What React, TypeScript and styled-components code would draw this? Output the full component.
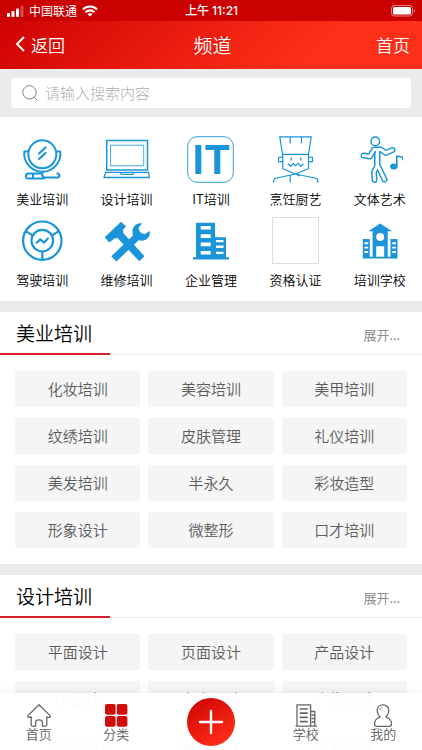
import React from "react";
import styled, { createGlobalStyle } from "styled-components";

const BLUE = "#1b95d9";

const GlobalStyle = createGlobalStyle`
  * { box-sizing: border-box; }
  body {
    margin: 0;
    background: #fff;
    font-family: "Noto Sans CJK SC", "Noto Sans", sans-serif;
    font-weight: 350;
    color: #000;
  }
  button, input { font: inherit; color: inherit; }
  button { border: 0; padding: 0; background: none; cursor: pointer; }
  a { color: inherit; text-decoration: none; }
  h1, h2 { margin: 0; font-weight: inherit; }
`;

const Screen = styled.div`
  position: relative;
  height: 100vh;
  display: flex;
  flex-direction: column;
  overflow: hidden;
`;

const StatusBar = styled.div`
  flex: none;
  height: 21px;
  padding: 0 6px 0 7px;
  display: grid;
  grid-template-columns: 1fr auto 1fr;
  align-items: center;
  background: #cb0000;
  color: #fff;
  font-size: 12px;
  line-height: 20px;
  font-weight: 400;
`;

const Carrier = styled.div`
  display: flex;
  align-items: center;
  gap: 5px;
`;

const Clock = styled.time`
  font-family: Inter, "Noto Sans CJK SC", sans-serif;
  font-weight: 500;
`;

const Battery = styled.div`
  display: flex;
  justify-content: flex-end;
`;

const Header = styled.header`
  flex: none;
  height: 48px;
  padding: 0 12px 2px 15px;
  display: grid;
  grid-template-columns: 1fr auto 1fr;
  align-items: center;
  background: linear-gradient(135deg, #ce0403 0%, #ff3019 75%);
  color: #fff;
  font-size: 17px;
`;

const BackLink = styled.a`
  display: flex;
  align-items: center;
  gap: 5px;
`;

const HomeLink = styled.a`
  justify-self: end;
`;

const Title = styled.h1`
  font-size: 19px;
`;

const SearchBar = styled.form`
  flex: none;
  height: 48px;
  padding: 9px 11px;
  background: #e9ebed;
`;

const SearchField = styled.label`
  height: 30px;
  padding: 0 11px;
  display: flex;
  align-items: center;
  gap: 7px;
  border-radius: 4px;
  background: #fff;
`;

const SearchInput = styled.input`
  flex: 1;
  min-width: 0;
  height: 30px;
  padding: 0 0 2px;
  border: 0;
  outline: 0;
  background: none;
  font-size: 15px;
  font-weight: 300;
  &::placeholder { color: #b0b0b0; opacity: 1; }
`;

const Content = styled.main`
  flex: 1;
  min-height: 0;
  overflow-y: auto;
  scrollbar-width: none;
  padding-bottom: 58px;
`;

const Channels = styled.nav`
  padding: 19px 0 5px;
  display: grid;
  grid-template-columns: repeat(5, 1fr);
  row-gap: 2px;
`;

const Channel = styled.a`
  display: flex;
  flex-direction: column;
  align-items: center;
  font-size: 13px;
  line-height: 32px;
`;

const ChannelIcon = styled.svg`
  display: block;
  width: 47px;
  height: 47px;
`;

const EmptyPicture = styled.span`
  width: 47px;
  height: 47px;
  border: 1px solid #dedede;
`;

const Section = styled.section`
  border-top: 11px solid #ebebeb;
`;

const SectionHead = styled.div`
  height: 43px;
  padding-right: 22px;
  display: flex;
  justify-content: space-between;
  border-bottom: 1px solid #ececec;
`;

const SectionTitle = styled.h2`
  width: 110px;
  height: 43px;
  padding-left: 16px;
  border-bottom: 2px solid #d71f2b;
  font-size: 19px;
  line-height: 42px;
  white-space: nowrap;
`;

const Expand = styled.button`
  color: #808080;
  font-size: 13px;
  line-height: 46px;
`;

const Tiles = styled.div`
  padding: 16px 15px;
  display: grid;
  grid-template-columns: repeat(3, 1fr);
  gap: 11px 8px;
`;

const Tile = styled.button`
  height: 36px;
  border-radius: 2px;
  background: #f5f5f5;
  color: #5c5c5c;
  font-size: 15px;
  line-height: 36px;
`;

const TabBar = styled.nav`
  position: absolute;
  left: 0;
  right: 0;
  bottom: 0;
  height: 57px;
  display: grid;
  grid-template-columns: 1fr 1fr 112px 1fr 1fr;
  justify-items: center;
  background: rgba(255, 255, 255, 0.97);
  box-shadow: 0 0 10px rgba(0, 0, 0, 0.08);
`;

const Tab = styled.a`
  padding-top: 11px;
  display: flex;
  flex-direction: column;
  align-items: center;
  color: #606060;
  font-size: 13px;
  line-height: 14px;
`;

const TabIcon = styled.svg`
  display: block;
  width: 24px;
  height: 23px;
  fill: none;
  stroke: #666;
  stroke-width: 1.3;
`;

const AddButton = styled.button`
  align-self: center;
  width: 48px;
  height: 48px;
  display: grid;
  place-items: center;
  border-radius: 50%;
  background: linear-gradient(150deg, #cf0604 5%, #ff2b17 85%);
`;

const dancer =
  "M7.5 19.5 L14 20.5 L18 13.5 L25 13.5 L29.5 17 L36.5 14 M21.5 14 V29 L24 34 L28.5 43.5 M21 18 V30 L18 36 L18.5 44";

const drawings: Record<string, React.ReactNode> = {
  mirror: (
    <g fill="none" stroke={BLUE} strokeWidth="2" strokeLinecap="round" strokeLinejoin="round">
      <circle cx="23.3" cy="18.3" r="14" />
      <path d="M9 15.500H5.300C4 25.500 12 35.800 23.300 35.800S42.600 25.500 41.300 15.500H37.600" />
      <path d="M20 17.5l6.500-6M20 23l6.500-6" strokeWidth="2.2" />
      <path d="M23.3 36v3.200c0 1.800 1 2.400 3 2.400h12c3 0 2.500-4 0-4M23.3 37.500H9.500c-3.600 0-3.600 5 0 5h14c2 0 2.500-1 2.500-1M14 38.500v3" />
    </g>
  ),
  laptop: (
    <g fill="none" stroke={BLUE} strokeWidth="1.5">
      <path d="M3.7 4.5h40.8v29.600H3.700z" />
      <path d="M7.5 9.200h33.200v20.600H7.500z" strokeWidth=".8" />
      <path d="M2.6 36.300h43l.8 5.200H1z M17 36.500l1.500 1.800h11.300l1.500-1.800" strokeWidth="1.3" />
    </g>
  ),
  it: (
    <>
      <rect x=".7" y=".7" width="45.6" height="45.6" rx="9.5" fill="none" stroke={BLUE} strokeWidth=".9" />
      <text x="24.500" y="37.500" textAnchor="middle" fill={BLUE} fontFamily="Inter, sans-serif" fontWeight="700" fontSize="40">
        IT
      </text>
    </>
  ),
  chef: (
    <path
      d="M10.5 18.3L7.8.8h31.4l-2.7 17.5zM18.2 1v6.5M29.5 1v6.5M10.8 18.5v14.2L23.5 38l13-5.3V18.5M10.8 20.8L6.5 21.5v4.2h4.3M36.5 20.8l4 .7v4.2h-4M19.2 21.5v3M28.8 21.5v3M15.8 27.7l3 2.6 2.4-3 2.3 2.3 2.7-2.3 2.6 3 2.700-2.600M1.300 46.700l1.200-4.200L23.500 38 45 42.500l1.300 4.200M18.200 39.500v7M23.500 38l4 2"
      fill="none"
      stroke={BLUE}
      strokeWidth="1.2"
    />
  ),
  dance: (
    <g fill="none" strokeLinecap="round" strokeLinejoin="round">
      <path d={dancer} stroke={BLUE} strokeWidth="6" />
      <path d={dancer} stroke="#fff" strokeWidth="3" />
      <circle cx="19.3" cy="5.4" r="4.3" stroke={BLUE} strokeWidth="1.5" fill="#fff" />
      <ellipse cx="37.800" cy="30.600" rx="3.8" ry="3" fill={BLUE} />
      <path d="M40.8 30V20l6 1.2v2.600" stroke={BLUE} strokeWidth="1.6" />
    </g>
  ),
  wheel: (
    <g fill="none" stroke={BLUE} strokeWidth="2.2" strokeLinecap="round" strokeLinejoin="round">
      <circle cx="23.3" cy="23.7" r="19.2" />
      <circle cx="23.3" cy="23.7" r="10.8" />
      <path d="M7.2 14.4l6.2 4M39.4 14.4l-6.2 4M23.3 35v7" />
      <path d="M17.700 25.800l3.600-3.400 3.800 3.200 3.800-4" />
    </g>
  ),
  tools: (
    <g fill={BLUE}>
      <path d="M1.7 20.3L18 4.8 23 9.3l-3 3.4.3 3.3 21.2 23.3-5.2 5-21.8-23.2-3 .5-5.300 4z" />
      <path d="M8.3 39.3L30 18.6c-2.2-7.6 2.6-13.4 9-12.2l-3.400 4.300c.3 4 2.800 6.300 6.400 6.200l4.700-3c1.300 6.600-4 11.300-11 9.300L13.400 44.400z" />
    </g>
  ),
  office: (
    <>
      <path d="M9 5.7h19v14.6h11v20h3v2.2H6v-2.2h3z" fill={BLUE} />
      <path
        d="M13.7 9h10v3.6h-10zM13.7 17.3h10v3.6h-10zM13.7 25.6h10v3.6h-10zM13.7 34h10v3.6h-10zM29 23h7.5v2.3H29zM29 28.6h7.5v2.3H29zM29 34.7h7.5V37H29z"
        fill="#fff"
      />
    </>
  ),
  school: (
    <>
      <path d="M24.2 6.5L36 14.3h-4.3v25.4h2.8V22h7v19.4H6.8V22h7v17.7h2.8V14.3h-4.2z" fill={BLUE} />
      <circle cx="24.2" cy="20" r="4" fill="#fff" />
      <path
        d="M20.2 29.3h8v10.4h-8zM8.5 25.3h3.7v1.9H8.5zM8.5 29.7h3.7v1.9H8.5zM8.5 34h3.7v1.9H8.5zM36.2 25.3h3.7v1.9h-3.7zM36.2 29.7h3.7v1.9h-3.7zM36.2 34h3.7v1.9h-3.7z"
        fill="#fff"
      />
    </>
  ),
};

const channels = [
  { label: "美业培训", icon: "mirror" },
  { label: "设计培训", icon: "laptop" },
  { label: "IT培训", icon: "it" },
  { label: "烹饪厨艺", icon: "chef" },
  { label: "文体艺术", icon: "dance" },
  { label: "驾驶培训", icon: "wheel" },
  { label: "维修培训", icon: "tools" },
  { label: "企业管理", icon: "office" },
  { label: "资格认证", icon: "" },
  { label: "培训学校", icon: "school" },
];

const sections = [
  {
    title: "美业培训",
    items: [
      "化妆培训", "美容培训", "美甲培训",
      "纹绣培训", "皮肤管理", "礼仪培训",
      "美发培训", "半永久", "彩妆造型",
      "形象设计", "微整形", "口才培训",
    ],
  },
  {
    title: "设计培训",
    items: [
      "平面设计", "页面设计", "产品设计",
      "UI设计", "室内设计", "广告设计",
      "动漫设计", "建筑设计", "服装设计",
    ],
  },
];

export default function App() {
  return (
    <Screen>
      <GlobalStyle />
      <StatusBar>
        <Carrier>
          <svg width="17" height="12" viewBox="0 0 17 12" fill="#fff" aria-hidden="true">
            <rect x="0" y="8" width="3" height="4" rx=".8" />
            <rect x="4.5" y="6" width="3" height="6" rx=".8" />
            <rect x="9" y="3.5" width="3" height="8.5" rx=".8" />
            <rect x="13.5" y="1" width="3" height="11" rx=".8" opacity=".3" />
          </svg>
          中国联通
          <svg width="16" height="12" viewBox="0 0 16 12" aria-hidden="true">
            <g fill="none" stroke="#fff" strokeWidth="2.1">
              <path d="M.9 4.4a10.2 10.2 0 0 1 14.2 0" />
              <path d="M3.5 7.2a6.4 6.4 0 0 1 9 0" />
            </g>
            <path d="M8 11.6L5.6 9.2a3.5 3.5 0 0 1 4.8 0z" fill="#fff" />
          </svg>
        </Carrier>
        <Clock>上午 11:21</Clock>
        <Battery>
          <svg width="25" height="12" viewBox="0 0 25 12" aria-label="电量">
            <rect x=".5" y=".5" width="21" height="10.5" rx="3" fill="none" stroke="#fff" strokeOpacity=".5" />
            <rect x="2" y="2" width="18" height="7.5" rx="1.6" fill="#fff" />
            <path d="M23 4c1.5.5 1.5 3 0 3.5z" fill="#fff" opacity=".5" />
          </svg>
        </Battery>
      </StatusBar>

      <Header>
        <BackLink href="#back">
          <svg width="11" height="16" viewBox="0 0 11 16" fill="none" stroke="#fff" strokeWidth="1.9" aria-hidden="true">
            <path d="M9 1L2 8l7 7" />
          </svg>
          返回
        </BackLink>
        <Title>频道</Title>
        <HomeLink href="#home">首页</HomeLink>
      </Header>

      <SearchBar role="search">
        <SearchField>
          <svg width="16" height="16" viewBox="0 0 16 16" fill="none" stroke="#858585" strokeWidth="1" aria-hidden="true">
            <circle cx="7.5" cy="7.3" r="6.7" />
            <path d="M12 12l3.500 3.500" />
          </svg>
          <SearchInput type="search" placeholder="请输入搜索内容" aria-label="搜索" />
        </SearchField>
      </SearchBar>

      <Content>
        <Channels>
          {channels.map((c) => (
            <Channel href="#channel" key={c.label}>
              {c.icon ? (
                <ChannelIcon viewBox="0 0 47 47" aria-hidden="true">{drawings[c.icon]}</ChannelIcon>
              ) : (
                <EmptyPicture />
              )}
              {c.label}
            </Channel>
          ))}
        </Channels>

        {sections.map((s) => (
          <Section key={s.title}>
            <SectionHead>
              <SectionTitle>{s.title}</SectionTitle>
              <Expand type="button">展开...</Expand>
            </SectionHead>
            <Tiles>
              {s.items.map((t) => (
                <Tile type="button" key={t}>{t}</Tile>
              ))}
            </Tiles>
          </Section>
        ))}
      </Content>

      <TabBar>
        <Tab href="#home">
          <TabIcon viewBox="0 0 24 23" aria-hidden="true">
            <path d="M12 .8L1.2 11.4c-1 1.2-.4 2.2 1 1.9l2-.3v7.8c0 1 .4 1.4 1.2 1.4h3.2v-3.7c0-3.6 6.8-3.6 6.8 0v3.7h3.2c.8 0 1.2-.4 1.2-1.4V13l2 .3c1.4.3 2-.7 1-1.9z" strokeLinejoin="round" />
          </TabIcon>
          首页
        </Tab>
        <Tab href="#category">
          <TabIcon viewBox="0 0 24 23" aria-hidden="true">
            <g fill="#d10d0b" stroke="none">
              <rect x="1" y="0" width="10.6" height="10.8" rx="2" />
              <rect x="12.8" y="0" width="10.6" height="10.8" rx="2" />
              <rect x="1" y="12" width="10.6" height="10.8" rx="2" />
              <rect x="12.8" y="12" width="10.6" height="10.8" rx="2" />
            </g>
          </TabIcon>
          分类
        </Tab>
        <AddButton type="button" aria-label="发布">
          <svg width="26" height="26" viewBox="0 0 26 26" stroke="#fff" strokeWidth="2.4" strokeLinecap="round" aria-hidden="true">
            <path d="M13 2v22M2 13h22" />
          </svg>
        </AddButton>
        <Tab href="#school">
          <TabIcon viewBox="0 0 24 23" aria-hidden="true">
            <path d="M3 22V.8h13.6V22M16.6 7.5h4.200V22M1.500 22.200h21.500" />
            <path d="M5.8 5h8M5.8 9.2h8M5.8 13.4h8M5.8 17.6h8M17.5 11h3M17.5 14.5h3M17.5 18h3" strokeWidth="1.7" />
          </TabIcon>
          学校
        </Tab>
        <Tab href="#me">
          <TabIcon viewBox="0 0 24 23" aria-hidden="true">
            <path d="M12 .8c-3.6 0-5.8 2.6-5.8 6 0 2.7 1.2 4.6 2.8 6.2C5.4 14.4 3.5 17 3.5 20c0 1.5.7 2.3 2.2 2.3h12.6c1.5 0 2.2-.8 2.2-2.3 0-3-1.900-5.600-5.500-7 1.600-1.600 2.800-3.500 2.800-6.200 0-3.400-2.200-6-5.800-6z" />
            <path d="M8.7 6.5c.2-1.9 1.2-3 2.8-3.2" strokeWidth=".8" />
          </TabIcon>
          我的
        </Tab>
      </TabBar>
    </Screen>
  );
}
